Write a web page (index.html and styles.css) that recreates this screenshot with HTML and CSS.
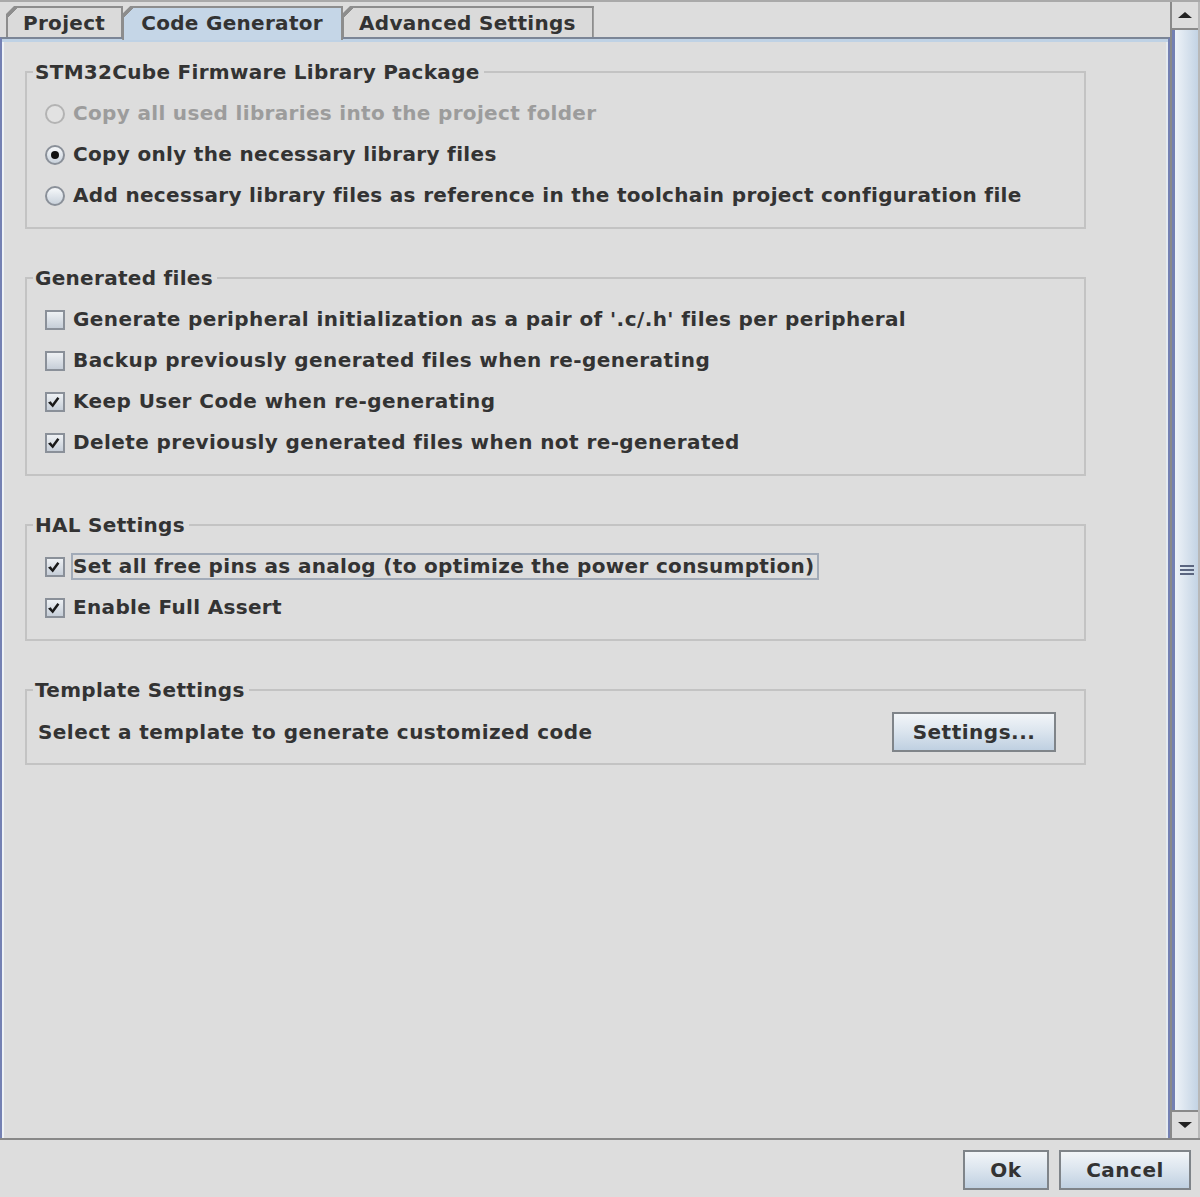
FILE: index.html
```html
<!DOCTYPE html>
<html lang="en">
<head>
    <meta charset="UTF-8">
    <title>Project Settings</title>
    <link rel="stylesheet" href="styles.css">
</head>
<body>
    <div class="window">
        <div class="scroll-pane">
            <div class="tabbed">
                <div class="tab-strip">
                    <div class="tab">Project</div>
                    <div class="tab selected">Code Generator</div>
                    <div class="tab">Advanced Settings</div>
                </div>

                <div class="tab-content">
                    <fieldset class="group">
                        <legend>STM32Cube Firmware Library Package</legend>
                        <div class="option disabled"><span class="radio"></span><span class="label">Copy all used libraries into the project folder</span></div>
                        <div class="option"><span class="radio checked"></span><span class="label">Copy only the necessary library files</span></div>
                        <div class="option"><span class="radio"></span><span class="label">Add necessary library files as reference in the toolchain project configuration file</span></div>
                    </fieldset>

                    <fieldset class="group">
                        <legend>Generated files</legend>
                        <div class="option wide"><span class="check"></span><span class="label">Generate peripheral initialization as a pair of '.c/.h' files per peripheral</span></div>
                        <div class="option wide"><span class="check"></span><span class="label">Backup previously generated files when re-generating</span></div>
                        <div class="option wide"><span class="check checked"><svg viewBox="0 0 16 16"><path d="M1 8.6 L3.8 7.2 L5.4 9.8 L10.4 3 L12.4 4.4 L5.8 13.6 Z"/></svg></span><span class="label">Keep User Code when re-generating</span></div>
                        <div class="option wide"><span class="check checked"><svg viewBox="0 0 16 16"><path d="M1 8.6 L3.8 7.2 L5.4 9.8 L10.4 3 L12.4 4.4 L5.8 13.6 Z"/></svg></span><span class="label">Delete previously generated files when not re-generated</span></div>
                    </fieldset>

                    <fieldset class="group">
                        <legend>HAL Settings</legend>
                        <div class="option"><span class="check checked"><svg viewBox="0 0 16 16"><path d="M1 8.6 L3.8 7.2 L5.4 9.8 L10.4 3 L12.4 4.4 L5.8 13.6 Z"/></svg></span><span class="label focused">Set all free pins as analog (to optimize the power consumption)</span></div>
                        <div class="option"><span class="check checked"><svg viewBox="0 0 16 16"><path d="M1 8.6 L3.8 7.2 L5.4 9.8 L10.4 3 L12.4 4.4 L5.8 13.6 Z"/></svg></span><span class="label">Enable Full Assert</span></div>
                    </fieldset>

                    <fieldset class="group">
                        <legend>Template Settings</legend>
                        <div class="template-row">
                            <span>Select a template to generate customized code</span>
                            <button class="settings-button">Settings...</button>
                        </div>
                    </fieldset>
                </div>
            </div>

            <div class="vscroll">
                <div class="arrow-button"><span class="arrow up"></span></div>
                <div class="thumb"><span class="grip"></span></div>
                <div class="arrow-button bottom"><span class="arrow down"></span></div>
            </div>
        </div>

        <div class="footer">
            <button class="ok-button">Ok</button>
            <button class="cancel-button">Cancel</button>
        </div>
    </div>
</body>
</html>
```

FILE: styles.css
```css
* {
    box-sizing: border-box;
}

body {
    margin: 0;
    background: #dddddd;
    font-family: "DejaVu Sans", sans-serif;
    font-weight: bold;
    font-size: 20px;
    color: #333333;
}

.window {
    height: 1197px;
    display: flex;
    flex-direction: column;
}

.scroll-pane {
    height: 1140px;
    display: flex;
    border-top: 2px solid #a9a9a9;
    border-bottom: 2px solid #888888;
    overflow: hidden;
}

/* tabs */

.tabbed {
    flex: 1;
    display: flex;
    flex-direction: column;
    min-width: 0;
}

.tab-strip {
    display: flex;
    height: 35px;
    padding: 4px 0 0 6px;
}

.tab {
    height: 31px;
    padding: 0 16px 0 15px;
    border: 2px solid #8d8d8d;
    border-bottom: none;
    line-height: 30px;
    letter-spacing: 0.3px;
    background: linear-gradient(135deg, #8d8d8d 0 7px, #dadada 7px);
    clip-path: polygon(8px 0, 100% 0, 100% 100%, 0 100%, 0 8px);
}

.tab + .tab {
    margin-left: -1px;
}

.tab.selected {
    height: 34px;
    position: relative;
    z-index: 1;
    padding: 0 18px 0 17px;
    background: linear-gradient(135deg, #8d8d8d 0 7px, #c5d6e7 7px);
}

.tab-content {
    flex: 1;
    border-top: 2px solid #7b8596;
    border-left: 2px solid #7480b2;
    border-right: 2px solid #7480b2;
    box-shadow: inset 0 3px 0 #bfd2e5, inset 2px 0 0 #eef2f6, inset -2px 0 0 #e4eaf0;
    padding: 21px 0 0 23px;
}

/* titled groups */

.group {
    width: 1061px;
    margin: 0 0 37px 0;
    padding: 9px 0 11px 6px;
    border: 2px solid #c3c3c3;
}

.group legend {
    padding: 0 4px 0 2px;
    line-height: 24px;
    letter-spacing: 0.3px;
}

.option {
    height: 41px;
    display: flex;
    align-items: center;
    margin-left: 12px;
    letter-spacing: 0.33px;
}

.option.wide {
    letter-spacing: 0.42px;
}

.option.disabled {
    color: #9c9c9c;
}

.label {
    border: 2px solid transparent;
    line-height: 23px;
    padding-right: 2px;
}

.label.focused {
    border-color: #a2abb8;
}

.radio {
    width: 20px;
    height: 20px;
    margin-right: 6px;
    border-radius: 50%;
    border: 2px solid #8a9099;
    background: linear-gradient(#f6f8fa, #c9d2dc);
    display: flex;
    align-items: center;
    justify-content: center;
}

.radio.checked::after {
    content: '';
    width: 8px;
    height: 8px;
    border-radius: 50%;
    background: #111111;
}

.disabled .radio {
    border-color: #b3b3b3;
    background: #e2e2e2;
}

.check {
    width: 20px;
    height: 20px;
    margin-right: 6px;
    border: 2px solid #8a9099;
    background: linear-gradient(#eef1f4, #c6ced8);
    display: flex;
    align-items: center;
    justify-content: center;
}

.check svg {
    width: 16px;
    height: 16px;
    fill: #1a1a1a;
}

.template-row {
    height: 41px;
    display: flex;
    align-items: center;
    justify-content: space-between;
    margin: 0 28px 0 5px;
    letter-spacing: 0.45px;
}

/* buttons */

button {
    height: 40px;
    font-family: inherit;
    font-weight: bold;
    font-size: 20px;
    letter-spacing: 0.5px;
    color: #333333;
    border: 2px solid #7f8489;
    background: linear-gradient(#f2f5f8, #dde6ef 45%, #bfd0e1);
    padding: 0;
}

.settings-button {
    width: 164px;
}

.ok-button {
    width: 86px;
}

.cancel-button {
    width: 132px;
}

.footer {
    flex: 1;
    display: flex;
    justify-content: flex-end;
    gap: 10px;
    padding: 10px 9px 0 0;
}

/* scrollbar */

.vscroll {
    width: 30px;
    display: flex;
    flex-direction: column;
    border-left: 2px solid #8a8a8a;
    border-right: 2px solid #b8b8b8;
}

.arrow-button {
    height: 28px;
    display: flex;
    align-items: center;
    justify-content: center;
    border-bottom: 2px solid #8a8a8a;
}

.arrow-button.bottom {
    border-bottom: none;
    border-top: 2px solid #8a8a8a;
}

.arrow {
    width: 0;
    height: 0;
    border-left: 7px solid transparent;
    border-right: 7px solid transparent;
}

.arrow.up {
    border-bottom: 6px solid #222222;
}

.arrow.down {
    border-top: 6px solid #222222;
}

.thumb {
    flex: 1;
    display: flex;
    align-items: center;
    justify-content: center;
    border-left: 3px solid #7480b2;
    background: linear-gradient(to right, #eef3f8, #c3d3e4);
}

.grip {
    width: 14px;
    height: 10px;
    background: repeating-linear-gradient(#5b6680 0 2px, transparent 2px 4px);
}
```
